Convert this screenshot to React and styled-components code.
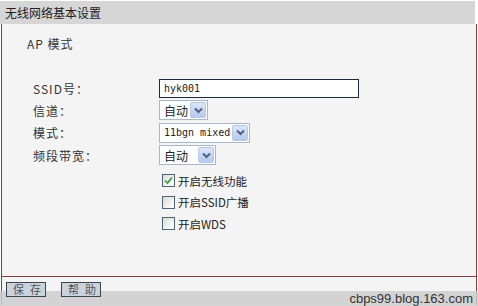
import React from 'react'
import styled, { createGlobalStyle } from 'styled-components'

const GlobalStyle = createGlobalStyle`
  html, body {
    margin: 0;
    padding: 0;
    background: #fff;
  }
  body {
    font-family: "Noto Sans CJK SC", "DejaVu Sans", sans-serif;
    font-size: 12px;
    color: #222;
  }
`

const Page = styled.div`
  position: relative;
  width: 478px;
  height: 306px;
  overflow: hidden;
  background: #fff;
  padding-top: 1px;
  box-sizing: border-box;
`

const Header = styled.div`
  height: 23px;
  line-height: 23px;
  width: 475px;
  padding-left: 5px;
  box-sizing: border-box;
  background: #d6d6d6;
  color: #222;
  font-size: 12px;
`

const Frame = styled.div`
  width: 476px;
  margin-left: 1px;
  box-sizing: border-box;
  border-left: 1px solid #8a3b3b;
  border-right: 1px solid #8a3b3b;
  background: #f4f4f4;
`

const Panel = styled.div`
  height: 253px;
  box-sizing: border-box;
  border-bottom: 1px solid #8a3b3b;
  padding: 12px 0 0 25px;
`

const Mode = styled.div`
  height: 16px;
  line-height: 16px;
  letter-spacing: 1px;
  color: #333;
`

const Form = styled.div`
  margin-top: 25px;
  margin-left: 6px;
  display: grid;
  grid-template-columns: 126px auto;
  grid-auto-rows: 22.3px;
  align-items: center;
`

const Label = styled.div`
  color: #333;
  letter-spacing: 1px;
`

const mono = '"DejaVu Sans Mono", "Liberation Mono", monospace'

const TextInput = styled.div`
  width: 200px;
  height: 19px;
  box-sizing: border-box;
  border: 1px solid #1b2b3b;
  background: #fff;
  padding-left: 4px;
  line-height: 17px;
  font-family: ${mono};
  font-size: 10px;
  color: #222;
  white-space: nowrap;
`

const SelectBox = styled.div`
  width: ${p => p.width}px;
  height: 20px;
  box-sizing: border-box;
  border: 1px solid #a8b8c8;
  background: #fff;
  display: flex;
  align-items: center;
  justify-content: space-between;
  padding: 0 1px 0 4px;
  font-family: ${p => p.mono ? mono : 'inherit'};
  font-size: ${p => p.mono ? '10px' : '12px'};
  color: #222;
  white-space: nowrap;
`

const Arrow = styled.span`
  flex: none;
  width: 16px;
  height: 16px;
  box-sizing: border-box;
  border: 1px solid #b6c8e6;
  background: linear-gradient(#dbe6f8, #b4c9ee);
  border-radius: 2px;
  display: flex;
  align-items: center;
  justify-content: center;
`

const Checks = styled.div`
  margin-top: 4px;
  margin-left: 135px;
  display: grid;
  grid-auto-rows: 21.5px;
  align-items: center;
`

const CheckRow = styled.div`
  display: flex;
  align-items: center;
  gap: 3px;
  color: #222;
  font-size: 11.5px;
`

const Box = styled.span`
  width: 13px;
  height: 13px;
  box-sizing: border-box;
  border: 1px solid #4d6478;
  background: linear-gradient(135deg, #dcdcd6, #fff);
  display: flex;
  align-items: center;
  justify-content: center;
`

const ButtonBar = styled.div`
  height: 28px;
  display: flex;
  gap: 15px;
  padding: 5px 0 0 4px;
  box-sizing: border-box;
`

const Button = styled.div`
  position: relative;
  z-index: 1;
  width: 40px;
  height: 15px;
  box-sizing: border-box;
  border: 1px solid #3d4650;
  background: #c9d3dd;
  color: #555;
  font-size: 11px;
  line-height: 13px;
  text-align: center;
  letter-spacing: 6px;
  padding-left: 6px;
  white-space: nowrap;
`

const Watermark = styled.div`
  position: absolute;
  left: 0;
  right: 0;
  bottom: 0;
  height: 15px;
  background: rgba(205, 205, 205, 0.85);
  font-family: "Liberation Sans", Arial, sans-serif;
  font-size: 13px;
  line-height: 15px;
  color: #333;
  text-align: right;
  padding-right: 5px;
`

const Chevron = () => (
  <svg width="9" height="7" viewBox="0 0 9 7">
    <path d="M1 1.5 L4.5 5 L8 1.5" fill="none" stroke="#4d6185" strokeWidth="2" />
  </svg>
)

const Tick = () => (
  <svg width="9" height="9" viewBox="0 0 9 9">
    <path d="M1 4.5 L3.5 7 L8 1.5" fill="none" stroke="#2f9a2f" strokeWidth="1.6" />
  </svg>
)

const Select = ({ value, width, mono }) => (
  <SelectBox width={width} mono={mono}>
    <span>{value}</span>
    <Arrow><Chevron /></Arrow>
  </SelectBox>
)

const Check = ({ checked, label }) => (
  <CheckRow>
    <Box>{checked && <Tick />}</Box>
    <span>{label}</span>
  </CheckRow>
)

const App = () => (
  <Page>
    <GlobalStyle />
    <Header>无线网络基本设置</Header>
    <Frame>
      <Panel>
        <Mode>AP 模式</Mode>
        <Form>
          <Label>SSID号：</Label>
          <TextInput>hyk001</TextInput>
          <Label>信道：</Label>
          <Select value="自动" width={49} />
          <Label>模式：</Label>
          <Select value="11bgn mixed" width={91} mono />
          <Label>频段带宽：</Label>
          <Select value="自动" width={57} />
        </Form>
        <Checks>
          <Check checked label="开启无线功能" />
          <Check label="开启SSID广播" />
          <Check label="开启WDS" />
        </Checks>
      </Panel>
      <ButtonBar>
        <Button>保存</Button>
        <Button>帮助</Button>
      </ButtonBar>
    </Frame>
    <Watermark>cbps99.blog.163.com</Watermark>
  </Page>
)

export default App
